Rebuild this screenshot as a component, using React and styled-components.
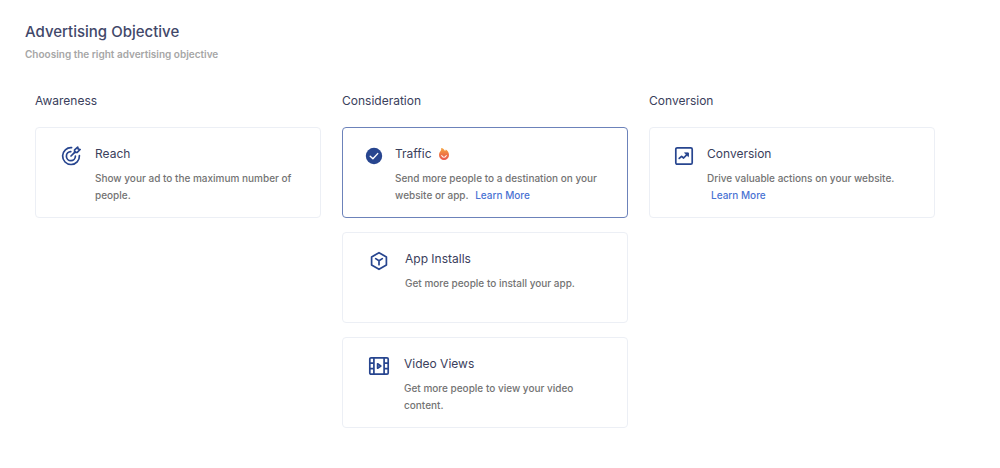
import React, { useState } from "react";
import styled, { createGlobalStyle } from "styled-components";

const GlobalStyle = createGlobalStyle`
  *, *::before, *::after { box-sizing: border-box; }
  body {
    margin: 0;
    background: #fff;
    color: #454b66;
    font-family: Inter, "Liberation Sans", sans-serif;
  }
`;

const Page = styled.main`
  padding: 21px 65px 40px 25px;
`;

const PageTitle = styled.h1`
  margin: 0;
  font-size: 15px;
  line-height: 22px;
  font-weight: 500;
  color: #42486a;
`;

const Subtitle = styled.p`
  margin: 3px 0 0;
  font-size: 10px;
  line-height: 16px;
  font-weight: 600;
  color: #a6a6a6;
`;

const Columns = styled.div`
  display: grid;
  grid-template-columns: repeat(3, minmax(0, 1fr));
  gap: 21px;
  margin-top: 30px;
  padding-left: 10px;
`;

const Column = styled.section`
  display: flex;
  flex-direction: column;
  gap: 14px;
`;

const ColumnTitle = styled.h2`
  margin: 0 0 3px;
  font-size: 12px;
  line-height: 18px;
  font-weight: 400;
  color: #3a405c;
`;

const Card = styled.label`
  display: flex;
  align-items: flex-start;
  min-height: 91px;
  padding: 17px 20px 12px 0;
  border: 1px solid ${(p) => (p.$selected ? "#6c82ba" : "#eceff5")};
  border-radius: 4px;
  cursor: pointer;

  &:focus-within { border-color: #27458f; }
`;

const HiddenRadio = styled.input`
  position: absolute;
  width: 1px;
  height: 1px;
  margin: 0;
  opacity: 0;
`;

const IconSlot = styled.span`
  display: flex;
  flex: none;
  align-items: center;
  justify-content: center;
  width: ${(p) => p.$width}px;
  height: 22px;
  padding-left: 10px;
  color: #27458f;
`;

const CardBody = styled.div`
  flex: 1;
  min-width: 0;
`;

const CardTitle = styled.div`
  display: flex;
  align-items: center;
  gap: 6px;
  font-size: 12px;
  line-height: 18px;
  font-weight: 400;
  color: #3a405c;
`;

const Description = styled.p`
  margin: 7px 0 0;
  font-size: 10px;
  line-height: 17px;
  font-weight: 500;
  color: #737373;
`;

const MoreLink = styled.a`
  margin-left: 4px;
  color: #4a73d3;
  text-decoration: none;
  white-space: nowrap;

  &:hover { text-decoration: underline; }
`;

const Icon = ({ width = 20, height = 20, children }) => (
  <svg
    width={width}
    height={height}
    viewBox={`0 0 ${width} ${height}`}
    fill="none"
    stroke="currentColor"
    strokeWidth="1.7"
    strokeLinecap="round"
    strokeLinejoin="round"
    aria-hidden="true"
  >
    {children}
  </svg>
);

const TargetIcon = () => (
  <Icon>
    <path d="M10.6 1.7A8.4 8.4 0 1 0 18.4 9.6" />
    <path d="M9.8 5.6A4.5 4.5 0 1 0 14.4 10.2" />
    <path d="M10 10l4.2-4.2" />
    <path d="M13.6 6.4V3.8l3.1-2.7.5 1.9 1.9.5-2.9 2.9z" />
  </Icon>
);

const CheckIcon = () => (
  <Icon width={18} height={18}>
    <circle cx="9" cy="9" r="8.2" fill="currentColor" stroke="none" />
    <path d="M5.2 9.2l2.7 2.6 4.8-5.2" stroke="#fff" strokeWidth="1.4" />
  </Icon>
);

const PointerIcon = () => (
  <Icon width={18} height={18}>
    <path d="M6 6l9 3.5-4 1.5-1.5 4zM4 1v2M1 4h2M1.8 1.8l1 1" />
  </Icon>
);

const TrendIcon = () => (
  <Icon>
    <rect x="1.8" y="1.8" width="16.4" height="16.4" rx="1.4" />
    <path d="M5.2 12.4l2.4-2.1 2 1.7 4-4.2" />
    <path d="M11 6.9h3.4v3.3z" fill="currentColor" strokeWidth="1" />
  </Icon>
);

const BoxIcon = () => (
  <Icon>
    <path d="M10 1.7l7.4 4.2v8.2L10 18.3l-7.4-4.2V5.9z" />
    <path d="M6.7 7.6L10 9.7l3.3-2.1M10 9.7v4" />
  </Icon>
);

const FilmIcon = () => (
  <Icon width={22}>
    <rect x="1.8" y="1.8" width="18.4" height="16.4" rx="1.2" />
    <path d="M5.9 2v16M16.1 2v16M2 7.2h3.9M2 12.7h3.9M16.1 7.2H20M16.1 12.7H20" />
    <path d="M9.6 7.8v4.4l3.2-2.2z" />
  </Icon>
);

const HotIcon = () => (
  <svg width="12" height="14" viewBox="0 0 12 14" role="img" aria-label="Popular">
    <defs>
      <linearGradient id="flame" x1="0" y1="0" x2="0" y2="1">
        <stop offset="0" stopColor="#f6a540" />
        <stop offset="0.5" stopColor="#ee7846" />
        <stop offset="1" stopColor="#e95750" />
      </linearGradient>
    </defs>
    <path
      d="M3.1 1C5 1.3 6.4 2.4 7 4c.5-.5.8-1 .8-1.6C9.7 3.5 11 5.5 11 7.9A5 5 0 0 1 6 13a5 5 0 0 1-5-5.1C1 6.6 1.4 5.5 2.2 4.6 3 3.6 3.5 2.3 3.1 1z"
      fill="url(#flame)"
    />
    <path d="M3.8 8.6a2.3 2.3 0 0 0 4.4 0" fill="none" stroke="#fff" strokeWidth="1.1" strokeLinecap="round" />
  </svg>
);

const groups = [
  {
    title: "Awareness",
    items: [
      { id: "reach", title: "Reach", text: "Show your ad to the maximum number of people.", icon: TargetIcon, slot: 59 },
    ],
  },
  {
    title: "Consideration",
    items: [
      { id: "traffic", title: "Traffic", text: "Send more people to a destination on your website or app.", icon: PointerIcon, slot: 52, hot: true, more: true },
      { id: "installs", title: "App Installs", text: "Get more people to install your app.", icon: BoxIcon, slot: 62 },
      { id: "views", title: "Video Views", text: "Get more people to view your video content.", icon: FilmIcon, slot: 61 },
    ],
  },
  {
    title: "Conversion",
    items: [
      { id: "conversion", title: "Conversion", text: "Drive valuable actions on your website.", icon: TrendIcon, slot: 57, more: true },
    ],
  },
];

function ObjectiveCard({ item, selected, onSelect }) {
  const ItemIcon = selected ? CheckIcon : item.icon;
  return (
    <Card $selected={selected} htmlFor={item.id}>
      <HiddenRadio type="radio" name="objective" id={item.id} checked={selected} onChange={onSelect} />
      <IconSlot $width={item.slot}>
        <ItemIcon />
      </IconSlot>
      <CardBody>
        <CardTitle>
          {item.title}
          {item.hot && <HotIcon />}
        </CardTitle>
        <Description>
          <span>{item.text}</span>{" "}
          {item.more && <MoreLink href="#learn-more">Learn More</MoreLink>}
        </Description>
      </CardBody>
    </Card>
  );
}

export default function App() {
  const [selected, setSelected] = useState("traffic");
  return (
    <>
      <GlobalStyle />
      <Page>
        <PageTitle>Advertising Objective</PageTitle>
        <Subtitle>Choosing the right advertising objective</Subtitle>
        <Columns>
          {groups.map((group) => (
            <Column key={group.title}>
              <ColumnTitle>{group.title}</ColumnTitle>
              {group.items.map((item) => (
                <ObjectiveCard
                  key={item.id}
                  item={item}
                  selected={selected === item.id}
                  onSelect={() => setSelected(item.id)}
                />
              ))}
            </Column>
          ))}
        </Columns>
      </Page>
    </>
  );
}
